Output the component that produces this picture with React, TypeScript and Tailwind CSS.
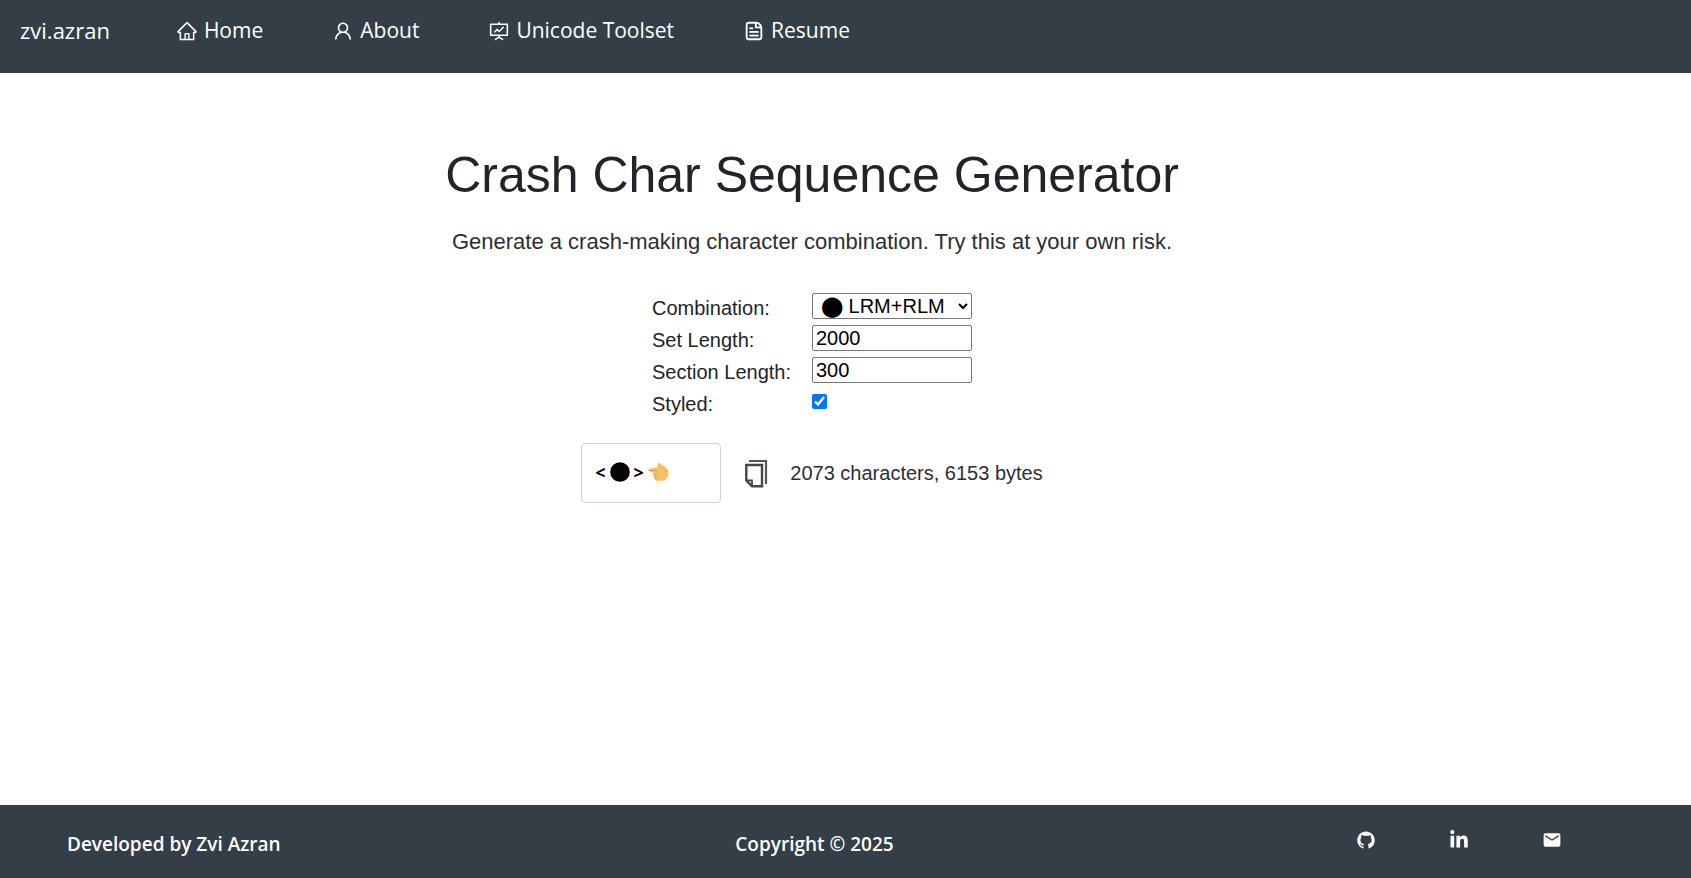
import { useState, type ReactNode } from "react";
import {
  AiOutlineHome,
  AiOutlineUser,
  AiOutlineFundProjectionScreen,
  AiFillGithub,
} from "react-icons/ai";
import { CgFileDocument } from "react-icons/cg";
import { FaLinkedinIn } from "react-icons/fa";
import { MdEmail } from "react-icons/md";

const links: { label: string; icon: ReactNode }[] = [
  { label: "Home", icon: <AiOutlineHome /> },
  { label: "About", icon: <AiOutlineUser /> },
  { label: "Unicode Toolset", icon: <AiOutlineFundProjectionScreen /> },
  { label: "Resume", icon: <CgFileDocument /> },
];

const socials: { label: string; icon: ReactNode }[] = [
  { label: "GitHub", icon: <AiFillGithub /> },
  { label: "LinkedIn", icon: <FaLinkedinIn /> },
  { label: "Email", icon: <MdEmail /> },
];

function Navbar() {
  return (
    <header className="flex h-[73px] items-start bg-[#343e47] px-5 pt-[15px] font-['Open_Sans','Noto_Sans',sans-serif] text-[22px] leading-[30px] text-white">
      <a href="#" className="mr-[66px] whitespace-nowrap">
        zvi.azran
      </a>
      <nav className="flex gap-[69px] text-[21px]">
        {links.map((link) => (
          <a key={link.label} href="#" className="flex items-center gap-1.5 whitespace-nowrap">
            <span className="mt-0.5 text-[22px]">{link.icon}</span>
            {link.label}
          </a>
        ))}
      </nav>
    </header>
  );
}

function CopyIcon() {
  return (
    <svg width="23" height="28" viewBox="0 0 23 28" fill="none" stroke="#43474b" aria-hidden="true">
      <path d="M4 1H21V24" strokeWidth="2.2" stroke="#53575b" />
      <path d="M1.3 5H17V26.2H7L1.3 20.4Z" strokeWidth="2.4" />
      <path d="M1.3 20.4H7V26.2" strokeWidth="1.8" />
    </svg>
  );
}

function PointingHand() {
  return (
    <svg width="21" height="20" viewBox="0 0 21 20" aria-hidden="true">
      <path
        d="M1 6.8L9.2 5.4C9.8 4.4 9.2 3.2 9.6 2C10 .8 11.2.8 12 1.6L14.6 4C18 4.6 20.6 7.4 20.6 11.2C20.6 15.6 17.6 18.8 13.4 18.8H9.2C7.2 18.8 6 17.4 6.6 16C5.4 15.4 5 13.9 5.7 12.9C4.9 12.2 4.7 11.4 5 10.5L1.6 9.3C0 8.8-.2 7.1 1 6.8Z"
        fill="#f5bf67"
      />
      <path
        d="M1.4 8.4L8.6 8.8M6 12.6H8.4M6.8 15.8H8.8"
        stroke="#c98f3c"
        strokeWidth=".7"
        strokeLinecap="round"
        fill="none"
      />
    </svg>
  );
}

export default function App() {
  const [styled, setStyled] = useState(true);
  const label = "text-xl leading-[30px]";
  const field = "h-[26px] w-40 rounded-[2px] border border-[#767676] bg-white text-xl leading-6 text-black";

  return (
    <div className="flex min-h-screen flex-col bg-white text-[#212529] font-['Liberation_Sans',Arial,sans-serif]">
      <Navbar />
      <main className="flex grow flex-col items-center pr-[67px] pt-[72px]">
        <h1 className="text-[50px] leading-[60px]">Crash Char Sequence Generator</h1>
        <p className="mt-[21px] text-[22px] leading-8 text-[#2b2f33]">
          Generate a crash-making character combination. Try this at your own risk.
        </p>

        <form className="mt-[35px] grid grid-cols-[160px_160px] gap-y-0.5">
          <label htmlFor="combination" className={label}>
            Combination:
          </label>
          <select id="combination" className={field + " pl-1"}>
            <option>⬤ LRM+RLM</option>
          </select>
          <label htmlFor="set-length" className={label}>
            Set Length:
          </label>
          <input id="set-length" type="text" defaultValue="2000" className={field + " px-[3px]"} />
          <label htmlFor="section-length" className={label}>
            Section Length:
          </label>
          <input id="section-length" type="text" defaultValue="300" className={field + " px-[3px]"} />
          <label htmlFor="styled" className={label}>
            Styled:
          </label>
          <input
            id="styled"
            type="checkbox"
            checked={styled}
            onChange={(e) => setStyled(e.target.checked)}
            className="mt-[5px] size-[15px] accent-[#0075ff]"
          />
        </form>

        <div className="mt-6 flex items-center">
          <output className="flex h-[60px] w-[140px] items-center rounded-[4px] border border-[#ced4da] pb-0.5 pl-[13px] font-['Open_Sans','Noto_Sans',sans-serif] text-lg font-bold text-black">
            <span>&lt;</span>
            <svg width="20" height="20" viewBox="0 0 20 20" className="mx-1" aria-hidden="true">
              <circle cx="10" cy="10" r="9.8" fill="#080307" />
            </svg>
            <span className="mr-1">&gt;</span>
            <PointingHand />
          </output>
          <button type="button" aria-label="Copy" className="ml-6 mt-0.5">
            <CopyIcon />
          </button>
          <span className="ml-[22px] text-xl leading-[30px] text-[#2b2f33]">2073 characters, 6153 bytes</span>
        </div>
      </main>

      <footer className="grid h-[73px] grid-cols-[1fr_auto_1fr] items-start bg-[#343e47] pl-[67px] pr-[129px] pt-[25px] font-['Open_Sans','Noto_Sans',sans-serif] text-[19px] font-semibold leading-7 text-white">
        <span>Developed by Zvi Azran</span>
        <span>Copyright © 2025</span>
        <div className="flex justify-end gap-[73px] text-xl">
          {socials.map((s) => (
            <a key={s.label} href="#" aria-label={s.label}>
              {s.icon}
            </a>
          ))}
        </div>
      </footer>
    </div>
  );
}
